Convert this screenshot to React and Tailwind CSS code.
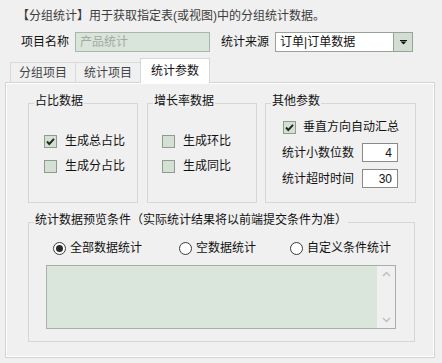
import React from "react";

const font = "font-['Liberation_Sans','Noto_Sans_CJK_SC',sans-serif]";

function Check({ checked }) {
  return (
    <span className="flex h-[13px] w-[13px] shrink-0 items-center justify-center border border-[#8f9b8f] bg-[#d4e0d4]">
      {checked && (
        <svg width="9" height="9" viewBox="0 0 9 9">
          <path d="M1 4.5 L3.3 7 L8 1.8" fill="none" stroke="#1f2a1f" strokeWidth="1.9" />
        </svg>
      )}
    </span>
  );
}

function Radio({ checked }) {
  return (
    <span className="flex h-[13px] w-[13px] shrink-0 items-center justify-center rounded-full border border-[#3a3a3a] bg-white">
      {checked && <span className="h-[7px] w-[7px] rounded-full bg-[#2a2a2a]" />}
    </span>
  );
}

function Group({ title, className, children }) {
  return (
    <fieldset className={`border border-[#d6d6d6] ${className}`}>
      <legend className="ml-[5px] px-[1px] pb-[4px] text-[12px] leading-[14px] text-[#111]">{title}</legend>
      {children}
    </fieldset>
  );
}

export default function App() {
  return (
    <div className={`h-[363px] w-[442px] overflow-hidden bg-[#f0f0f0] text-[12px] text-[#111] ${font}`}>
      <div className="pl-[17px] pt-[8px] leading-[16px] text-[#3c3c3c]">
        【分组统计】用于获取指定表(或视图)中的分组统计数据。
      </div>

      <div className="mt-[8px] flex h-[20px] items-center pl-[21px]">
        <span className="leading-[16px]">项目名称</span>
        <div className="ml-[6px] flex h-[20px] w-[135px] items-center border border-[#a9b7aa] bg-[#d9e4da] pl-[4px] text-[#a3aaa3]">
          产品统计
        </div>
        <span className="ml-[11px] leading-[16px]">统计来源</span>
        <div className="ml-[6px] flex h-[20px] w-[138px] border border-[#98a398] bg-white">
          <span className="flex flex-1 items-center pl-[4px]">订单|订单数据</span>
          <span className="flex w-[19px] items-center justify-center border-l border-[#98a398] bg-[#d3ded3]">
            <svg width="7" height="5" viewBox="0 0 7 5">
              <rect x="0" y="0" width="7" height="1" fill="#111" />
              <path d="M0.5 1.5 H6.5 L3.5 4.5 Z" fill="#111" />
            </svg>
          </span>
        </div>
      </div>

      <div className="mt-[7px] flex h-[24px] items-end pl-[10px]">
        <div className="flex h-[21px] w-[65px] items-center justify-center border-l border-t border-[#d9d9d9] text-[#444]">
          分组项目
        </div>
        <div className="flex h-[21px] w-[65px] items-center justify-center border-l border-t border-[#d9d9d9] text-[#444]">
          统计项目
        </div>
        <div className="relative z-10 flex h-[25px] w-[70px] items-center justify-center border-x border-t border-[#d6d6d6] bg-white pb-[1px]">
          统计参数
        </div>
      </div>

      <div className="ml-[5px] mt-[-1px] h-[276px] w-[430px] border border-[#d3d3d3] pl-[22px] pt-[11px] shadow-[inset_0_0_0_1px_#ffffff]">
        <div className="flex">
          <Group title="占比数据" className="h-[109px] w-[110px]">
            <div className="flex flex-col gap-[9px] pl-[15px] pt-[21px]">
              <div className="flex h-[16px] items-center">
                <Check checked />
                <span className="ml-[8px]">生成总占比</span>
              </div>
              <div className="flex h-[16px] items-center">
                <Check />
                <span className="ml-[8px]">生成分占比</span>
              </div>
            </div>
          </Group>
          <Group title="增长率数据" className="ml-[9px] h-[109px] w-[110px]">
            <div className="flex flex-col gap-[9px] pl-[14px] pt-[21px]">
              <div className="flex h-[16px] items-center">
                <Check />
                <span className="ml-[8px]">生成环比</span>
              </div>
              <div className="flex h-[16px] items-center">
                <Check />
                <span className="ml-[8px]">生成同比</span>
              </div>
            </div>
          </Group>
          <Group title="其他参数" className="ml-[8px] h-[109px] w-[151px]">
            <div className="flex flex-col pt-[7px]">
              <div className="flex h-[16px] items-center pl-[17px]">
                <Check checked />
                <span className="ml-[7px]">垂直方向自动汇总</span>
              </div>
              <div className="mt-[8px] flex items-center pl-[16px]">
                <span className="w-[80px]">统计小数位数</span>
                <span className="flex h-[19px] w-[36px] items-center justify-end border border-[#8a8a8a] bg-white pr-[5px]">4</span>
              </div>
              <div className="mt-[7px] flex items-center pl-[16px]">
                <span className="w-[80px]">统计超时时间</span>
                <span className="flex h-[19px] w-[36px] items-center justify-end border border-[#8a8a8a] bg-white pr-[5px]">30</span>
              </div>
            </div>
          </Group>
        </div>

        <Group title="统计数据预览条件（实际统计结果将以前端提交条件为准）" className="mt-[10px] h-[129px] w-[387px]">
          <div className="flex h-[16px] items-center pl-[24px] pt-0 mt-[9px]">
            <div className="flex w-[126px] items-center">
              <Radio checked />
              <span className="ml-[4px]">全部数据统计</span>
            </div>
            <div className="flex w-[111px] items-center">
              <Radio />
              <span className="ml-[4px]">空数据统计</span>
            </div>
            <div className="flex items-center">
              <Radio />
              <span className="ml-[4px]">自定义条件统计</span>
            </div>
          </div>
          <div className="ml-[17px] mt-[9px] flex h-[64px] w-[350px] border border-[#a6b0a6] bg-[#dae5dc]">
            <div className="flex-1" />
            <div className="flex w-[18px] flex-col items-center justify-between bg-[#f0f0f0] py-[5px]">
              <svg width="9" height="6" viewBox="0 0 9 6">
                <path d="M1 5 L4.5 1.5 L8 5" fill="none" stroke="#bdbdbd" strokeWidth="1.4" />
              </svg>
              <svg width="9" height="6" viewBox="0 0 9 6">
                <path d="M1 1 L4.5 4.5 L8 1" fill="none" stroke="#bdbdbd" strokeWidth="1.4" />
              </svg>
            </div>
          </div>
        </Group>
      </div>
    </div>
  );
}
